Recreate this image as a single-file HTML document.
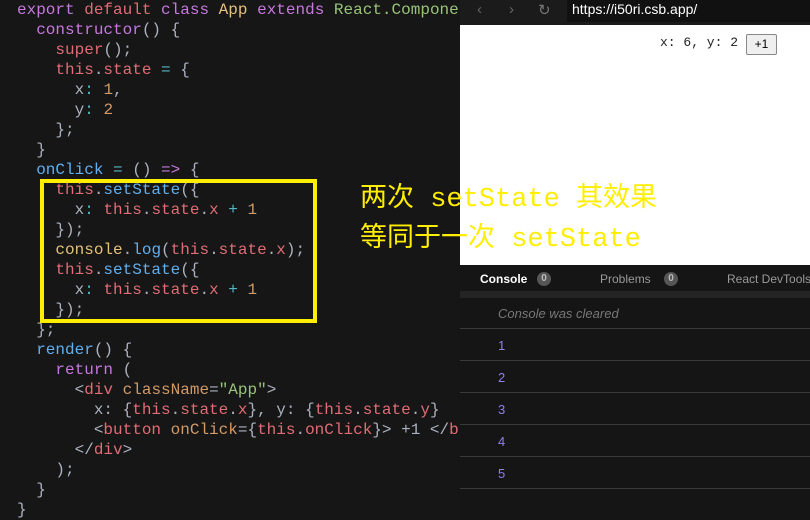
<!DOCTYPE html>
<html><head><meta charset="utf-8"><style>
body{margin:0;width:810px;height:520px;background:#161616;overflow:hidden;position:relative;font-family:"Liberation Sans",sans-serif}
#code{position:absolute;left:17px;top:0;font-family:"Liberation Mono",monospace;font-size:16px;line-height:20px;color:#abb2bf;white-space:pre}
.k{color:#c678dd}.r{color:#e06c75}.y{color:#e5c07b}.g{color:#98c379}.b{color:#61afef}.n{color:#d19a66}.c{color:#56b6c2}.p{color:#abb2bf}
#box{position:absolute;left:40px;top:179px;width:269px;height:136px;border:4px solid #ffee00}
#note{position:absolute;z-index:5;left:360px;top:180px;color:#ffee00;font-size:27px;line-height:40px;font-family:"Liberation Mono","Noto Sans CJK SC",monospace;white-space:pre}
#br{position:absolute;left:460px;top:0;width:350px;height:520px;background:#151515}
#bar{position:absolute;left:0;top:0;width:350px;height:25px;background:#1b1b1b}
#url{position:absolute;left:107px;top:0;width:243px;height:22px;background:#111;color:#fff;font-size:14px;line-height:18px;padding-left:5px}
#page{position:absolute;left:0;top:25px;width:350px;height:240px;background:#fff}
#xy{position:absolute;left:200px;top:10px;font-family:"Liberation Mono",monospace;font-size:13px;color:#222}
#btn{position:absolute;left:286px;top:9px;width:29px;height:19px;border:1px solid #888;border-radius:2px;background:#efefef;font-size:12px;text-align:center;line-height:19px;color:#000}
#tabs{position:absolute;left:0;top:267px;width:350px;height:24px;background:#151515;font-size:12px;color:#999}
.badge{display:inline-block;width:14px;height:14px;border-radius:7px;background:#555;color:#bbb;font-size:10px;text-align:center;line-height:14px;font-weight:bold}
#sep{position:absolute;left:0;top:291px;width:350px;height:7px;background:#242424}
.row{position:absolute;left:0;width:350px;height:31px;border-bottom:1px solid #3a3a3a;font-size:13px;color:#8f7ff0;line-height:31px;padding-left:38px;box-sizing:border-box}
</style></head><body>
<div id="code"><span class="k">export</span> <span class="r">default</span> <span class="k">class</span> <span class="y">App</span> <span class="k">extends</span> <span class="g">React.Compone</span>
  <span class="k">constructor</span>() {
    <span class="r">super</span>();
    <span class="r">this</span>.<span class="r">state</span> <span class="c">=</span> {
      x<span class="c">:</span> <span class="n">1</span>,
      y<span class="c">:</span> <span class="n">2</span>
    };
  }
  <span class="b">onClick</span> <span class="c">=</span> () <span class="k">=&gt;</span> {
    <span class="r">this</span>.<span class="b">setState</span>({
      x<span class="c">:</span> <span class="r">this</span>.<span class="r">state</span>.<span class="r">x</span> <span class="c">+</span> <span class="n">1</span>
    });
    <span class="y">console</span>.<span class="b">log</span>(<span class="r">this</span>.<span class="r">state</span>.<span class="r">x</span>);
    <span class="r">this</span>.<span class="b">setState</span>({
      x<span class="c">:</span> <span class="r">this</span>.<span class="r">state</span>.<span class="r">x</span> <span class="c">+</span> <span class="n">1</span>
    });
  };
  <span class="b">render</span>() {
    <span class="k">return</span> (
      &lt;<span class="r">div</span> <span class="n">className</span>=<span class="g">"App"</span>&gt;
        x: {<span class="r">this</span>.<span class="r">state</span>.<span class="r">x</span>}, y: {<span class="r">this</span>.<span class="r">state</span>.<span class="r">y</span>}
        &lt;<span class="r">button</span> <span class="n">onClick</span>={<span class="r">this</span>.<span class="r">onClick</span>}&gt; +1 &lt;/<span class="r">b</span>
      &lt;/<span class="r">div</span>&gt;
    );
  }
}</div>
<div id="box"></div>
<div id="br">
<div id="bar"><span style="position:absolute;left:17px;top:1px;color:#666;font-size:15px">&lsaquo;</span><span style="position:absolute;left:49px;top:1px;color:#666;font-size:15px">&rsaquo;</span><span style="position:absolute;left:78px;top:1px;color:#777;font-size:15px">&#8635;</span><div id="url">https://i50ri.csb.app/</div></div>
<div id="page"><div id="xy">x: 6, y: 2</div><div id="btn">+1</div></div>
<div id="tabs"><span style="position:absolute;left:20px;top:5px;color:#fff;font-weight:bold">Console</span><span class="badge" style="position:absolute;left:77px;top:5px">0</span><span style="position:absolute;left:140px;top:5px">Problems</span><span class="badge" style="position:absolute;left:204px;top:5px">0</span><span style="position:absolute;left:267px;top:5px;white-space:nowrap">React DevTools</span></div>
<div id="sep"></div>
<div class="row" style="top:298px;color:#777;font-style:italic">Console was cleared</div>
<div class="row" style="top:330px">1</div>
<div class="row" style="top:362px">2</div>
<div class="row" style="top:394px">3</div>
<div class="row" style="top:426px">4</div>
<div class="row" style="top:458px">5</div>
</div>
<div id="note">两次 setState 其效果
等同于一次 setState</div>
</body></html>
